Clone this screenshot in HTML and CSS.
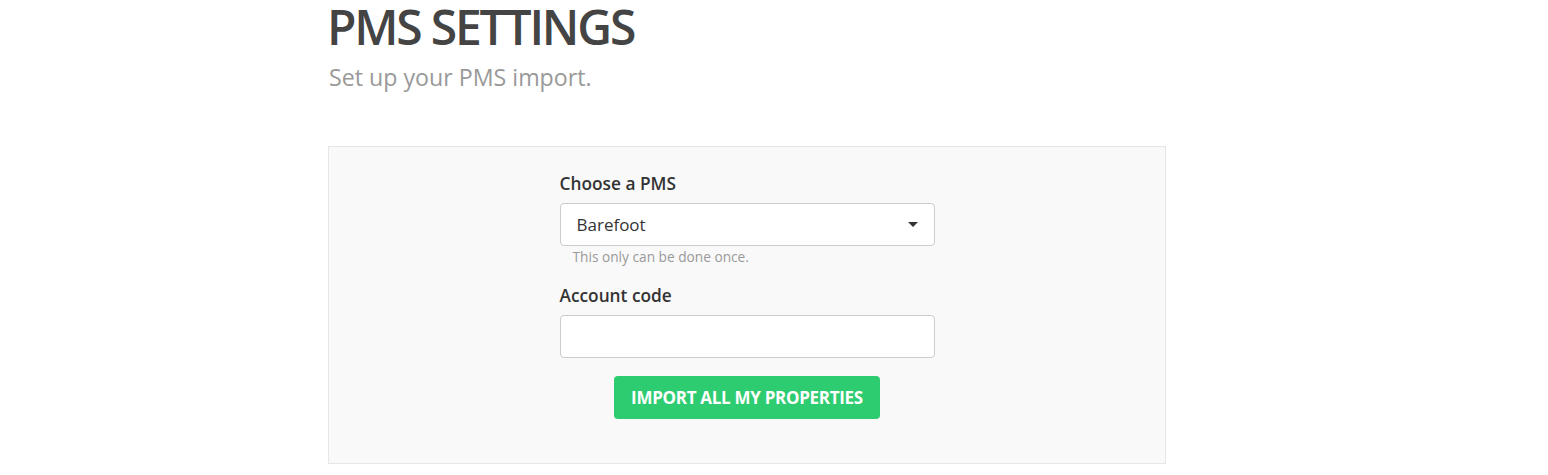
FILE: index.html
```html
<!DOCTYPE html>
<html>
<head>
<meta charset="utf-8">
<link rel="stylesheet" href="styles.css">
</head>
<body>
<div class="page">
  <h1 class="title">PMS SETTINGS</h1>
  <p class="subtitle">Set up your PMS import.</p>
  <div class="panel">
    <form class="form">
      <div class="field">
        <label class="label">Choose a PMS</label>
        <div class="select">
          <span class="select-value">Barefoot</span>
          <svg class="caret" width="10" height="5" viewBox="0 0 10 5"><path d="M0 0h10L5 5z" fill="#333"/></svg>
        </div>
        <div class="help">This only can be done once.</div>
      </div>
      <div class="field">
        <label class="label">Account code</label>
        <div class="input"></div>
      </div>
      <div class="actions">
        <button type="button" class="btn">IMPORT ALL MY PROPERTIES</button>
      </div>
    </form>
  </div>
</div>
</body>
</html>
```
FILE: styles.css
```css
* { box-sizing: border-box; }
body {
  margin: 0;
  background: #fff;
  font-family: "Open Sans", "Liberation Sans", sans-serif;
  color: #333;
}
.page {
  margin-left: 328px;
  width: 838px;
}
.title {
  margin: 0 0 0 -1px;
  font-size: 48px;
  font-weight: 600;
  letter-spacing: -2.2px;
  line-height: 54px;
  color: #444;
}
.subtitle {
  margin: 8px 0 0 1px;
  font-size: 23.2px;
  line-height: 30px;
  color: #999;
}
.panel {
  margin-top: 54px;
  background: #f9f9f9;
  border: 1px solid #e6e6e6;
  padding: 26px 0 44px;
  height: 318px;
}
.form {
  width: 375px;
  margin: 0 auto;
}
.label {
  display: block;
  font-size: 17.3px;
  font-weight: 600;
  line-height: 22px;
  color: #333;
  margin-bottom: 8px;
}
.select, .input {
  height: 43px;
  background: #fff;
  border: 1px solid #ccc;
  border-radius: 4px;
}
.select {
  display: flex;
  align-items: center;
  justify-content: space-between;
  padding: 0 16px 0 16px;
  font-size: 17px;
  color: #333;
}
.help {
  margin-top: 2px;
  padding-left: 13px;
  font-size: 13.7px;
  line-height: 18px;
  color: #999;
}
.field + .field { margin-top: 19px; }
.actions {
  display: flex;
  justify-content: center;
  margin-top: 18px;
}
.btn {
  height: 43px;
  width: 266px;
  background: #2ecc71;
  color: #fff;
  border: none;
  border-radius: 4px;
  font-family: "Open Sans", "Liberation Sans", sans-serif;
  font-size: 17px;
  font-weight: 700;
  letter-spacing: -0.3px;
}
```
